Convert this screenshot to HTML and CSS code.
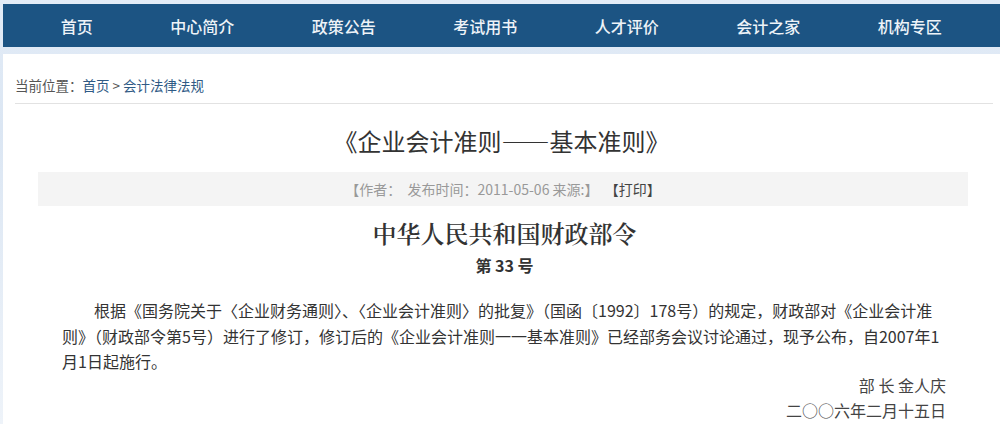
FILE: index.html
```html
<!DOCTYPE html>
<html lang="zh-CN">
<head>
<meta charset="utf-8">
<title>企业会计准则——基本准则</title>
<link rel="stylesheet" href="styles.css">
</head>
<body>
<div class="page">
  <nav class="nav">
    <a class="nav-item" href="#">首页</a>
    <a class="nav-item" href="#">中心简介</a>
    <a class="nav-item" href="#">政策公告</a>
    <a class="nav-item" href="#">考试用书</a>
    <a class="nav-item" href="#">人才评价</a>
    <a class="nav-item" href="#">会计之家</a>
    <a class="nav-item" href="#">机构专区</a>
  </nav>
  <main class="content">
    <div class="crumb">当前位置：<a href="#">首页</a> &gt; <a href="#">会计法律法规</a></div>
    <h1 class="title">《企业会计准则——基本准则》</h1>
    <div class="meta">【作者：&nbsp; 发布时间：2011-05-06 来源:】&nbsp; <span class="print">【打印】</span></div>
    <h2 class="decree">中华人民共和国财政部令</h2>
    <div class="decree-no">第 33 号</div>
    <p class="body-text">根据《国务院关于〈企业财务通则〉、〈企业会计准则〉的批复》（国函〔1992〕178号）的规定，财政部对《企业会计准则》（财政部令第5号）进行了修订，修订后的《企业会计准则一一基本准则》已经部务会议讨论通过，现予公布，自2007年1月1日起施行。</p>
    <div class="sign">
      <div>部 长 金人庆</div>
      <div>二○○六年二月十五日</div>
    </div>
  </main>
</div>
</body>
</html>
```
FILE: styles.css
```css
* { box-sizing: border-box; }
html, body { margin: 0; padding: 0; }
body {
  background: linear-gradient(180deg, #e3ecf7 0%, #dbe6f3 30%, #eef3f9 100%);
  font-family: "Noto Sans CJK SC", "Noto Sans", sans-serif;
  color: #333;
  height: 424px;
  overflow: hidden;
}
.page {
  padding: 4px 0 0 3px;
}
.nav {
  display: flex;
  height: 43px;
  background: #1c5483;
  padding-left: 19px;
}
.nav-item {
  display: flex;
  align-items: center;
  justify-content: center;
  padding: 0 38.75px;
  color: #eef3f8;
  text-decoration: none;
  font-size: 16px;
  font-weight: 500;
}
.content {
  margin-top: 7px;
  background: #fff;
  height: 380px;
  padding-top: 21px;
}
.crumb {
  margin: 0 7px 0 12px;
  padding-bottom: 8px;
  border-bottom: 1px solid #e2e2e2;
  font-size: 13.5px;
  line-height: 20px;
  color: #555;
}
.crumb a { color: #2f5a85; text-decoration: none; }
.title {
  margin: 21px 0 0;
  text-align: center;
  font-size: 24px;
  font-weight: 400;
  line-height: 32px;
  color: #333;
}
.meta {
  margin: 15px 32px 0 35px;
  height: 34px;
  background: #f4f4f4;
  text-align: center;
  font-size: 14px;
  line-height: 34px;
  color: #999;
}
.meta .print { color: #444; }
.decree {
  margin: 10px 0 0;
  text-align: center;
  font-family: "Noto Serif CJK SC", "Source Han Serif SC", "AR PL UMing CN", "Noto Sans CJK SC", serif;
  font-size: 24px;
  font-weight: 600;
  line-height: 34px;
  color: #333;
  padding-left: 6px;
}
.decree-no {
  margin-top: 3px;
  text-align: center;
  font-size: 16px;
  font-weight: 700;
  line-height: 24px;
  color: #333;
  padding-left: 6px;
}
.body-text {
  margin: 21px 60px 0 59px;
  text-indent: 2em;
  font-size: 16px;
  line-height: 25.5px;
  color: #333;
}
.sign {
  margin: -2px 54px 0 0;
  text-align: right;
  font-size: 16px;
  line-height: 25px;
  color: #444;
}
```
